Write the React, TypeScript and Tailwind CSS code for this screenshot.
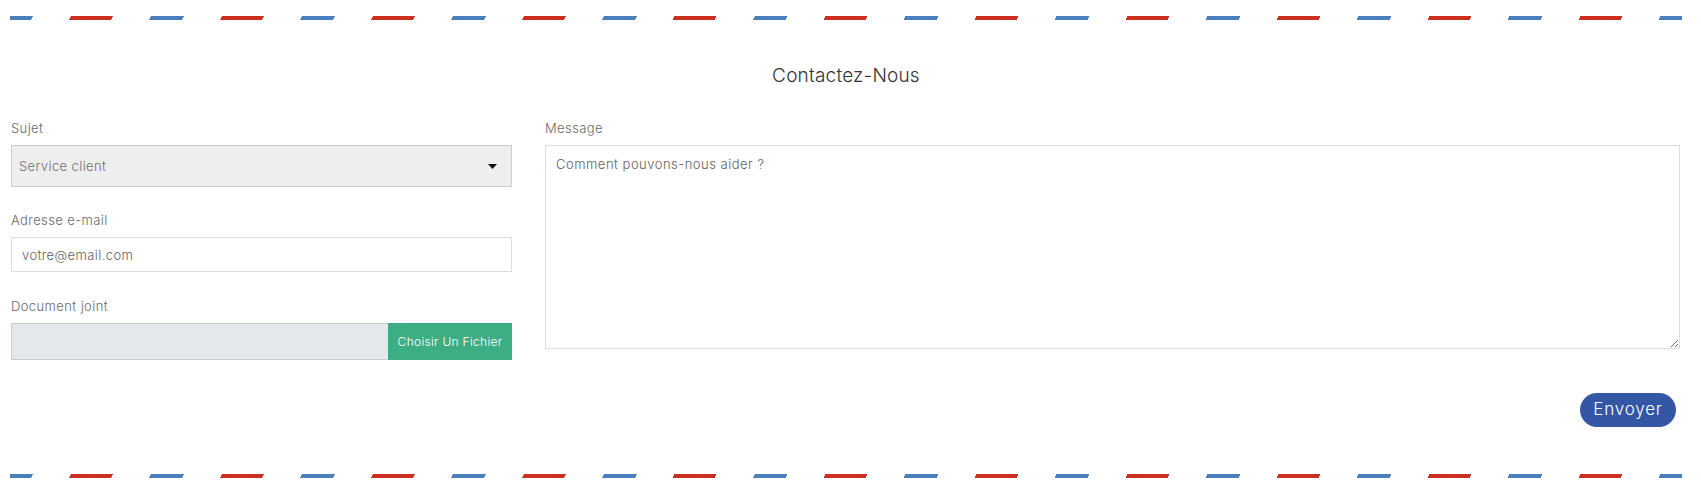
import { useState } from "react";

// airmail-style border drawn with a repeating gradient
function AirmailStripe() {
    return (
        <div className="ml-[10px] w-[1672px] h-[4px] bg-[repeating-linear-gradient(116.57deg,#4a7fbd_0_20.6px,transparent_20.6px_54.5px,#cb2f1f_54.5px_92.1px,transparent_92.1px_126.1px,#4a7fbd_126.1px_135px)]" />
    );
}

function Label({ children }: { children: React.ReactNode }) {
    return <label className="block text-[13px] leading-[18px] tracking-[0.4px] text-[#6a6a6a] mb-[8px]">{children}</label>;
}

export default function App() {
    const [subject, setSubject] = useState("service");
    const [fileName, setFileName] = useState("");

    return (
        <main className="bg-white w-[1701px] h-[494px] pt-[16px] font-['Inter','Liberation_Sans',sans-serif] font-light text-[#555]">
            <AirmailStripe />

            <h1 className="mt-[42px] ml-[10px] w-[1672px] text-center text-[19px] leading-[28px] tracking-[0.2px] text-[#333]">
                Contactez-Nous
            </h1>

            <form className="ml-[11px] mt-[29px] grid grid-cols-[501px_1135px] items-start gap-x-[33px]">
                <div className="flex flex-col">
                    <Label>Sujet</Label>
                    <div className="relative">
                        <select
                            value={subject}
                            onChange={(e) => setSubject(e.target.value)}
                            className="appearance-none w-full h-[42px] bg-[#eeeeee] border border-[#cccccc] px-[7px] pt-[1px] text-[13px] tracking-[0.4px] text-[#707070] font-light outline-none"
                        >
                            <option value="service">Service client</option>
                            <option value="commande">Commande</option>
                            <option value="autre">Autre</option>
                        </select>
                        <svg className="absolute right-[15px] top-[19px] pointer-events-none" width="9" height="5" viewBox="0 0 9 5">
                            <path d="M0 0h9L4.5 5z" fill="#111" />
                        </svg>
                    </div>

                    <div className="mt-[24px]">
                        <Label>Adresse e-mail</Label>
                        <input
                            type="email"
                            placeholder="votre@email.com"
                            className="w-full h-[35px] border border-[#dddddd] px-[10px] text-[13px] tracking-[0.4px] text-[#5f5f5f] placeholder:text-[#5f5f5f] outline-none"
                        />
                    </div>

                    <div className="mt-[25px]">
                        <Label>Document joint</Label>
                        <label className="flex h-[37px] cursor-pointer">
                            <span className="flex-1 bg-[#e5e8eb] border border-[#cccccc] border-r-0 px-[10px] flex items-center text-[12px] text-[#666] truncate">
                                {fileName}
                            </span>
                            <span className="w-[124px] bg-[#3dae84] text-white text-[12px] tracking-[0.3px] flex items-center justify-center">
                                Choisir Un Fichier
                            </span>
                            <input
                                type="file"
                                className="hidden"
                                onChange={(e) => setFileName(e.target.files?.[0]?.name ?? "")}
                            />
                        </label>
                    </div>
                </div>

                <div className="flex flex-col">
                    <Label>Message</Label>
                    <textarea
                        placeholder="Comment pouvons-nous aider ?"
                        className="w-full h-[204px] border border-[#dddddd] px-[10px] py-[9px] text-[13px] leading-[18px] tracking-[0.5px] text-[#5f5f5f] placeholder:text-[#5f5f5f] outline-none"
                    />
                </div>
            </form>

            <div className="ml-[10px] w-[1666px] mt-[33px] flex justify-end">
                <button className="h-[34px] w-[96px] rounded-full bg-[#3356a5] text-white text-[17px] font-light tracking-[0.8px]">
                    Envoyer
                </button>
            </div>

            <div className="mt-[47px]">
                <AirmailStripe />
            </div>
        </main>
    );
}
